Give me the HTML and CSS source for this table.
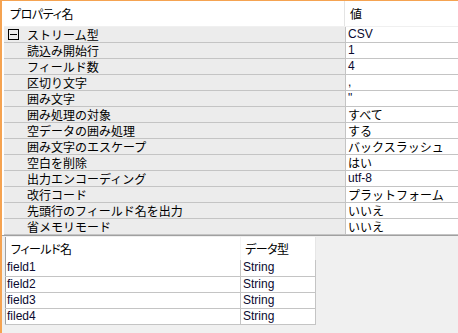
FILE: index.html
```html
<!DOCTYPE html>
<html lang="ja">
<head>
<meta charset="utf-8">
<link rel="stylesheet" href="styles.css">
</head>
<body>
<div class="window">
  <div class="pgrid">
    <div class="phead">
      <div class="ph-name">プロパティ名</div>
      <div class="ph-value">値</div>
    </div>
    <div class="prow">
      <div class="pname cat"><svg class="toggle" width="11" height="11" viewBox="0 0 11 11"><rect x="0.5" y="0.5" width="10" height="10" fill="none" stroke="#000"/><line x1="2" y1="5.5" x2="9" y2="5.5" stroke="#000"/></svg><span>ストリーム型</span></div>
      <div class="pval latin">CSV</div>
    </div>
    <div class="prow"><div class="pname">読込み開始行</div><div class="pval latin">1</div></div>
    <div class="prow"><div class="pname">フィールド数</div><div class="pval latin">4</div></div>
    <div class="prow"><div class="pname">区切り文字</div><div class="pval latin">,</div></div>
    <div class="prow"><div class="pname">囲み文字</div><div class="pval latin">"</div></div>
    <div class="prow"><div class="pname">囲み処理の対象</div><div class="pval">すべて</div></div>
    <div class="prow"><div class="pname">空データの囲み処理</div><div class="pval">する</div></div>
    <div class="prow"><div class="pname">囲み文字のエスケープ</div><div class="pval">バックスラッシュ</div></div>
    <div class="prow"><div class="pname">空白を削除</div><div class="pval">はい</div></div>
    <div class="prow"><div class="pname">出力エンコーディング</div><div class="pval latin">utf-8</div></div>
    <div class="prow"><div class="pname">改行コード</div><div class="pval">プラットフォーム</div></div>
    <div class="prow"><div class="pname">先頭行のフィールド名を出力</div><div class="pval">いいえ</div></div>
    <div class="prow"><div class="pname">省メモリモード</div><div class="pval">いいえ</div></div>
  </div>
  <div class="fpanel">
    <table class="ftable">
      <colgroup><col class="col1"><col class="col2"></colgroup>
      <thead>
        <tr class="fhead"><th class="fh h1">フィールド名</th><th class="fh h2">データ型</th></tr>
      </thead>
      <tbody>
        <tr class="frow"><td class="fc c1">field1</td><td class="fc c2">String</td></tr>
        <tr class="frow"><td class="fc c1">field2</td><td class="fc c2">String</td></tr>
        <tr class="frow"><td class="fc c1">field3</td><td class="fc c2">String</td></tr>
        <tr class="frow"><td class="fc c1">filed4</td><td class="fc c2">String</td></tr>
      </tbody>
    </table>
  </div>
</div>
</body>
</html>
```
FILE: styles.css
```css
html, body {
  margin: 0;
  padding: 0;
  width: 458px;
  height: 333px;
  overflow: hidden;
  background: #f0f0f0;
}
body {
  font-family: "Noto Sans CJK JP", "Liberation Sans", sans-serif;
  font-size: 12px;
  color: #000;
}
.window {
  box-sizing: border-box;
  width: 458px;
  height: 333px;
  border-top: 1px solid #f5a351;
  border-left: 2px solid #f5a351;
  display: flex;
  flex-direction: column;
  background: #f0f0f0;
}
.pgrid {
  background: #fff;
  padding-left: 2px;
  display: flex;
  flex-direction: column;
}
.phead {
  height: 26px;
  display: grid;
  grid-template-columns: 340px 1fr;
  border-bottom: 1px solid #f0f0f0;
  box-sizing: border-box;
}
.ph-name {
  padding-left: 6px;
  line-height: 25px;
  font-feature-settings: "palt";
  letter-spacing: -0.4px;
}
.ph-value {
  border-left: 1px solid #e4e4e4;
  padding-left: 5px;
  line-height: 25px;
}
.prow {
  display: grid;
  grid-template-columns: 342px 1fr;
  height: 16px;
  box-sizing: border-box;
  border-bottom: 1px solid #c4c4c4;
}
.pname {
  background: #ececec;
  padding-left: 23px;
  line-height: 15px;
  white-space: nowrap;
  border-right: 1px solid #c4c4c4;
}
.pname.cat {
  padding-left: 4px;
  display: flex;
  align-items: center;
}
.toggle {
  margin-right: 8px;
  flex: none;
}
.pval {
  padding-left: 2px;
  line-height: 15px;
  white-space: nowrap;
}
.latin {
  font-family: "Liberation Sans", sans-serif;
  color: #0a0a30;
}
.fpanel {
  flex: 1;
  border-top: 1px solid #a0a0a0;
  padding: 1px 0 0 3px;
  background: #f0f0f0;
}
.ftable {
  border-collapse: collapse;
  table-layout: fixed;
  width: 311px;
  border-left: 1px solid #a0a0a0;
}
.col1 { width: 235px; }
.col2 { width: 75px; }
.fh {
  height: 23px;
  padding: 0 0 0 5px;
  background: #fff;
  text-align: left;
  font-weight: normal;
  font-feature-settings: "palt";
  letter-spacing: -0.5px;
  white-space: nowrap;
  line-height: 23px;
}
.h2 { padding-left: 4px; border-left: 1px solid #f4f4f4; border-right: 1px solid #e6e6e6; }
.fc {
  height: 16px;
  box-sizing: border-box;
  padding: 0 0 0 1px;
  font-family: "Liberation Sans", sans-serif;
  color: #0a0a30;
  background: #fff;
  border: 1px solid #c4c4c4;
  border-left: none;
  border-top: none;
  line-height: 15px;
}
.c2 { padding-left: 2px; }
```
